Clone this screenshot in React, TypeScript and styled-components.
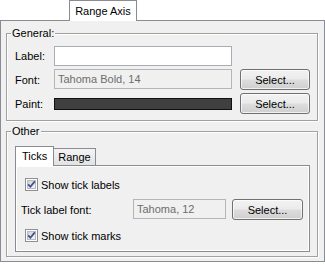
import styled, { createGlobalStyle } from "styled-components"

const GlobalStyle = createGlobalStyle`
    body {
        margin: 0;
        background: #ffffff;
        font-family: Tahoma, "Liberation Sans", Arial, sans-serif;
        font-size: 11px;
        color: #000000;
    }
`

const BORDER = "#898c95"

//top tab strip
const Page = styled.div`
    width: 325px;
`

const TabStrip = styled.div`
    display: flex;
    height: 20px;
    padding-left: 69px;
`

const TopTab = styled.div`
    position: relative;
    z-index: 1;
    box-sizing: border-box;
    width: 68px;
    height: 21px;
    padding-top: 4px;
    text-align: center;
    background: #ffffff;
    border: 1px solid ${BORDER};
    border-bottom: none;
`

const Panel = styled.div`
    display: flex;
    flex-direction: column;
    gap: 10px;
    padding: 12px 6px 4px 5px;
    background: #f0f0f0;
    border: 1px solid ${BORDER};
`

const Group = styled.div`
    display: flex;
    flex-direction: column;
    border: 1px solid #a0a0a0;
    box-shadow: inset 1px 1px 0 #ffffff, 1px 1px 0 #ffffff;
`

const GroupTitle = styled.div`
    align-self: flex-start;
    height: 13px;
    line-height: 13px;
    margin: -7px 0 0 4px;
    padding: 0 1px;
    background: #f0f0f0;
`

const FormGrid = styled.div`
    display: grid;
    grid-template-columns: 39px 178px 78px;
    grid-template-rows: 20px 21px 21px;
    row-gap: 3px;
    padding: 6px 8px 6px 8px;
`

const FieldLabel = styled.div`
    align-self: center;
`

const TextField = styled.div<{ disabled?: boolean }>`
    box-sizing: border-box;
    height: 20px;
    padding: 3px 0 0 3px;
    color: #6d6d6d;
    background: ${props => props.disabled ? "#f0f0f0" : "#ffffff"};
    border: 1px solid ${props => props.disabled ? "#b5b5b5" : "#a8acb4"};
    white-space: nowrap;
    overflow: hidden;
`

const PaintBar = styled.div`
    align-self: center;
    height: 12px;
    background: #404040;
    border: 1px solid #101010;
    box-sizing: border-box;
`

const Button = styled.button<{ width?: number }>`
    box-sizing: border-box;
    width: ${props => props.width ?? 70}px;
    height: 21px;
    padding: 0;
    font: inherit;
    color: #000000;
    border: 1px solid #707070;
    border-radius: 3px;
    background: linear-gradient(to bottom, #f2f2f2 0%, #ebebeb 48%, #dddddd 52%, #cfcfcf 100%);
    box-shadow: inset 0 0 0 1px rgba(255, 255, 255, 0.7);
`

const ButtonCell = styled.div`
    padding-left: 8px;
`

//inner tabs
const Tabs = styled.div`
    display: flex;
    align-items: flex-end;
    height: 19px;
    margin: 8px 7px 0 8px;
`

const InnerTab = styled.div<{ selected?: boolean }>`
    position: relative;
    z-index: ${props => props.selected ? 2 : 1};
    box-sizing: border-box;
    height: ${props => props.selected ? 20 : 17}px;
    margin-bottom: ${props => props.selected ? -1 : 0}px;
    margin-left: ${props => props.selected ? 0 : -1}px;
    padding: ${props => props.selected ? "3px 6px 0 6px" : "2px 4px 0 4px"};
    border: 1px solid ${BORDER};
    border-bottom: none;
    background: ${props => props.selected ? "#ffffff" : "linear-gradient(to bottom, #f4f4f4, #e2e2e2)"};
`

const TabPanel = styled.div`
    display: flex;
    flex-direction: column;
    margin: 0 7px 4px 8px;
    padding: 12px 0 9px 5px;
    border: 1px solid ${BORDER};
    box-shadow: inset 1px 1px 0 #ffffff, inset -1px -1px 0 #ffffff;
`

const CheckRow = styled.label<{ gap?: number }>`
    display: flex;
    align-items: center;
    gap: 3px;
    height: 13px;
    margin-left: 4px;
    margin-top: ${props => props.gap ?? 0}px;
`

const FontRow = styled.div`
    display: flex;
    align-items: flex-start;
    height: 21px;
    margin-top: 8px;
`

const RowLabel = styled.div`
    width: 112px;
    align-self: center;
`

const SmallField = styled(TextField)`
    width: 93px;
    margin-right: 6px;
`

const CheckBox = () => (
    <svg width="13" height="13" viewBox="0 0 13 13">
        <defs>
            <linearGradient id="cbg" x1="0" y1="0" x2="1" y2="1">
                <stop offset="0" stopColor="#cdd0d4" />
                <stop offset="1" stopColor="#f7f7f7" />
            </linearGradient>
        </defs>
        <rect x="0.5" y="0.5" width="12" height="12" fill="#ffffff" stroke="#8e8f8f" />
        <rect x="2.5" y="2.5" width="8" height="8" fill="url(#cbg)" stroke="#b7bcc2" />
        <path d="M3.2 6.4 L5.4 8.8 L9.8 3.4" fill="none" stroke="#3b4f8c" strokeWidth="1.7" />
    </svg>
)

export default function App() {
    return (
        <Page>
            <GlobalStyle />
            <TabStrip>
                <TopTab>Range Axis</TopTab>
            </TabStrip>
            <Panel>
                <Group>
                    <GroupTitle>General:</GroupTitle>
                    <FormGrid>
                        <FieldLabel>Label:</FieldLabel>
                        <TextField />
                        <div />

                        <FieldLabel>Font:</FieldLabel>
                        <TextField disabled>Tahoma Bold, 14</TextField>
                        <ButtonCell><Button>Select...</Button></ButtonCell>

                        <FieldLabel>Paint:</FieldLabel>
                        <PaintBar />
                        <ButtonCell><Button>Select...</Button></ButtonCell>
                    </FormGrid>
                </Group>
                <Group>
                    <GroupTitle>Other</GroupTitle>
                    <Tabs>
                        <InnerTab selected>Ticks</InnerTab>
                        <InnerTab>Range</InnerTab>
                    </Tabs>
                    <TabPanel>
                        <CheckRow><CheckBox />Show tick labels</CheckRow>
                        <FontRow>
                            <RowLabel>Tick label font:</RowLabel>
                            <SmallField disabled>Tahoma, 12</SmallField>
                            <Button width={71}>Select...</Button>
                        </FontRow>
                        <CheckRow gap={9}><CheckBox />Show tick marks</CheckRow>
                    </TabPanel>
                </Group>
            </Panel>
        </Page>
    )
}
